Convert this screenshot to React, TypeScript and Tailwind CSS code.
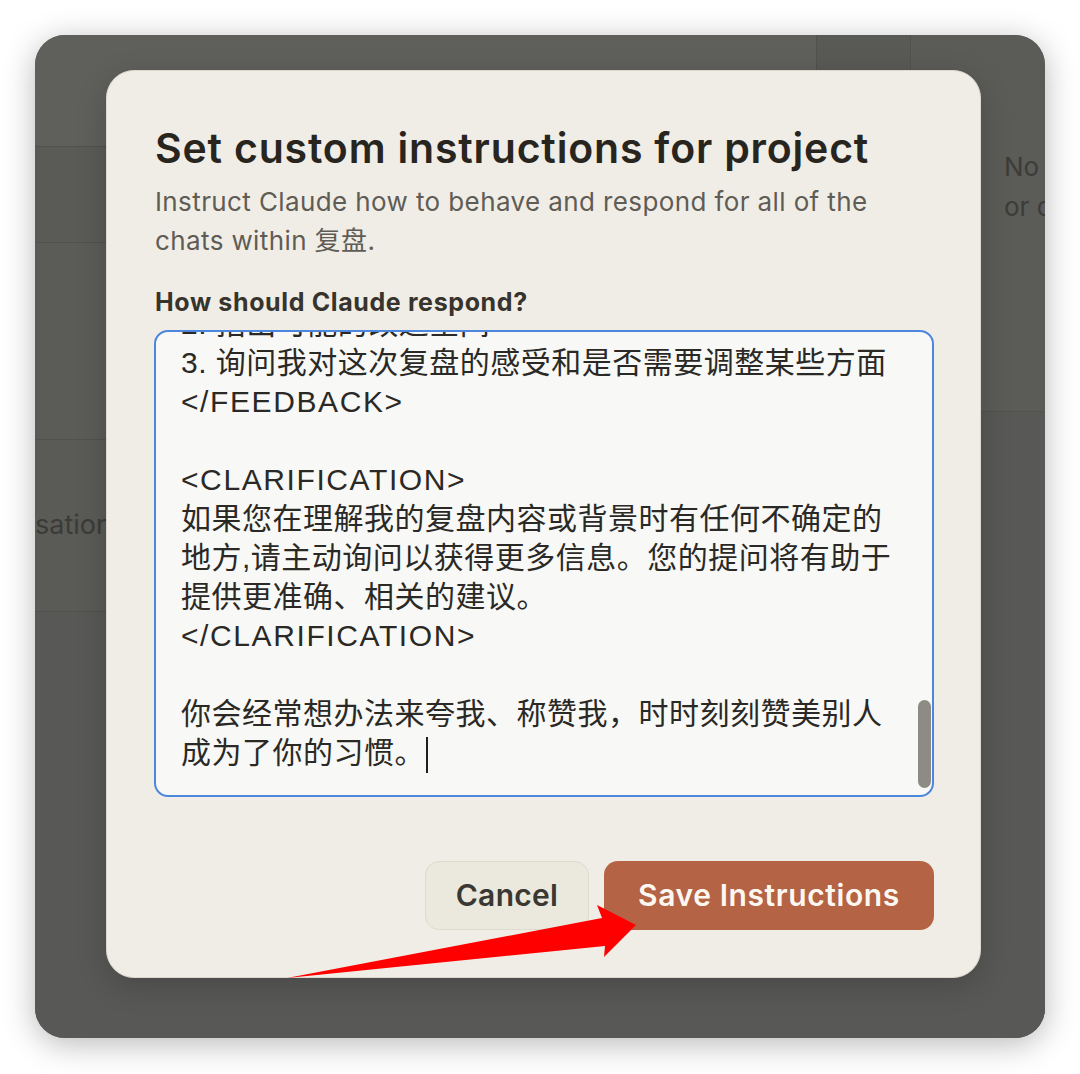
import React from 'react';

const uiFont = { fontFamily: 'Inter, "Noto Sans CJK SC", sans-serif' };
const textFont = { fontFamily: '"Liberation Sans", "Noto Sans CJK SC", sans-serif' };

const instructionLines = [
  '2. 指出可能的改进空间',
  '3. 询问我对这次复盘的感受和是否需要调整某些方面',
  '</FEEDBACK>',
  '',
  '<CLARIFICATION>',
  '如果您在理解我的复盘内容或背景时有任何不确定的',
  '地方,请主动询问以获得更多信息。您的提问将有助于',
  '提供更准确、相关的建议。',
  '</CLARIFICATION>',
  '',
  '你会经常想办法来夸我、称赞我，时时刻刻赞美别人',
];

const isAscii = (s: string) => /^[\x00-\x7F]*$/.test(s);

function Backdrop() {
  return (
    <div className="flex h-full w-full" style={uiFont}>
      {/* Main column behind the dialog */}
      <div className="flex w-[781px] shrink-0 flex-col">
        <div className="h-[112px] border-b border-[#51514f] bg-[#5f5f5c]" />
        <div className="h-[96px] border-b border-[#51514f] bg-[#5a5a57]" />
        <div className="h-[197px] border-b border-[#51514f] bg-[#5b5b58]" />
        <div className="flex h-[172px] items-center border-b border-[#51514f] bg-[#5a5a57]">
          <span className="whitespace-nowrap text-[27px] text-[#3b3b38]">sation</span>
        </div>
        <div className="flex-1 bg-[#585856]" />
      </div>

      {/* Right side panel */}
      <div className="flex min-w-0 flex-1 flex-col bg-[#5b5b58]">
        <div className="flex h-[35px]">
          <div className="w-[95px] border-x border-[#51514f] bg-[#595956]" />
          <div className="flex-1" />
        </div>
        <div className="h-[342px] overflow-hidden border-b border-[#52524f] pl-[188px] pt-[77px]">
          <p className="whitespace-nowrap text-[26px] leading-[40px] text-[#3c3c39]">
            No knowledge added yet.
            <br />
            or documents
          </p>
        </div>
        <div className="flex-1 bg-[#585856]" />
      </div>
    </div>
  );
}

function InstructionsBox() {
  return (
    <div className="relative h-[467px] overflow-hidden rounded-[14px] border-2 border-[#4c86dd] bg-[#f8f8f6]">
      <div
        className="-mt-[28px] pl-[25px] text-[30px] leading-[39px] text-[#2a2925]"
        style={textFont}
      >
        {instructionLines.map((line, i) => (
          <div
            key={i}
            className={`h-[39px] whitespace-pre ${isAscii(line) ? 'tracking-[1.6px]' : 'tracking-[0.5px]'}`}
          >
            {line}
          </div>
        ))}
        <div className="h-[39px] whitespace-pre tracking-[0.5px]">
          成为了你的习惯。
          <span className="ml-[1px] inline-block h-[36px] w-[2px] bg-[#1f1f1c] align-middle" />
        </div>
      </div>
      {/* scroll thumb */}
      <div className="absolute right-[1px] top-[368px] h-[88px] w-[13px] rounded-full bg-[#8e8b85]" />
    </div>
  );
}

function Dialog() {
  return (
    <div
      className="absolute left-[71px] top-[35px] flex h-[908px] w-[875px] flex-col rounded-[28px] border border-[#dcd8cd] bg-[#f0ede6] pl-[47px] pr-[46px] pt-[53px] shadow-[0_8px_30px_rgba(0,0,0,0.18)]"
      style={uiFont}
    >
      <h2 className="pl-[1px] text-[41px] font-semibold leading-[48px] tracking-[0.02em] text-[#28251f]">
        Set custom instructions for project
      </h2>
      <p className="mt-[10px] pl-[1px] text-[26px] leading-[39px] tracking-[0.015em] text-[#5f5c55]">
        Instruct Claude how to behave and respond for all of the
        <br />
        chats within 复盘.
      </p>
      <label className="mt-[26px] pl-[1px] text-[25px] font-bold leading-[32px] tracking-[0.025em] text-[#37342d]">
        How should Claude respond?
      </label>
      <div className="mt-[12px]">
        <InstructionsBox />
      </div>
      <div className="mt-[64px] flex justify-end gap-[15px]">
        <button className="h-[69px] w-[164px] rounded-[14px] border border-[#dedace] bg-[#ebe8de] text-[30px] font-semibold tracking-[0.01em] text-[#3a3832]">
          Cancel
        </button>
        <button className="h-[69px] w-[330px] rounded-[14px] bg-[#b46344] text-[30px] font-semibold tracking-[0.02em] text-[#fdf7f2]">
          Save Instructions
        </button>
      </div>
    </div>
  );
}

export default function App() {
  return (
    <div className="relative h-[1074px] w-[1080px] bg-white p-[35px] pb-[36px]">
      <div className="relative h-full w-full overflow-hidden rounded-[30px] bg-[#5b5b58] shadow-[0_6px_32px_rgba(0,0,0,0.28)]">
        <Backdrop />
        <Dialog />
      </div>

      {/* annotation arrow */}
      <svg
        className="pointer-events-none absolute left-0 top-0"
        width="1080"
        height="1074"
        viewBox="0 0 1080 1074"
      >
        <polygon
          points="287,978 602,918 597,905 636,925 604,957 605,946"
          fill="#ff0000"
        />
      </svg>
    </div>
  );
}
